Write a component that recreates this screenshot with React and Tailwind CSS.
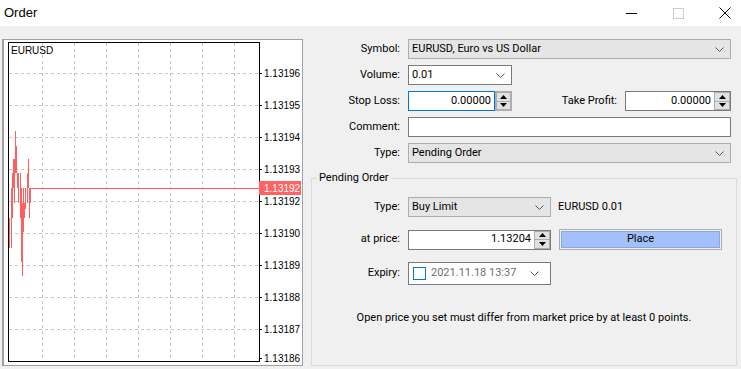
const bars = [
  [8, 218, 248], [10, 188, 248], [11, 173, 218], [12, 159, 188], [13, 159, 203],
  [14, 131, 173], [15, 146, 173], [16, 173, 188], [17, 173, 203], [19, 173, 218],
  [20, 188, 262], [21, 203, 276], [22, 188, 232], [23, 203, 218], [24, 188, 209],
  [26, 173, 203], [27, 159, 188], [28, 188, 218], [29, 188, 203],
];

const gridX = [41, 73, 105, 137, 169, 201, 233];
const gridY = [73, 105, 137, 169, 201, 233, 265, 297, 329];
const prices = [
  ["1.13196", 73], ["1.13195", 105], ["1.13194", 137], ["1.13193", 169], ["1.13192", 201],
  ["1.13190", 233], ["1.13189", 265], ["1.13188", 297], ["1.13187", 329], ["1.13186", 358],
];

function Chart() {
  return (
    <svg width="299" height="325" viewBox="3 40 299 325" className="block">
      {gridX.map((x) => (
        <line key={x} x1={x + 0.5} y1="43" x2={x + 0.5} y2="361" stroke="#c8c8c8" strokeDasharray="3 3" />
      ))}
      {gridY.map((y) => (
        <line key={y} x1="8" y1={y + 0.5} x2="258" y2={y + 0.5} stroke="#c8c8c8" strokeDasharray="3 3" />
      ))}
      {bars.map(([x, a, b], i) => (
        <line key={i} x1={x + 0.5} y1={a} x2={x + 0.5} y2={b} stroke="#ff5f5f" />
      ))}
      <line x1="29" y1="188.5" x2="258" y2="188.5" stroke="#ff5f5f" />
      <rect x="7.5" y="42.5" width="251" height="319" fill="none" stroke="#000" />
      {prices.map(([p, y]) => (
        <g key={p}>
          <line x1="258" y1={y + 0.5} x2="261" y2={y + 0.5} stroke="#000" />
          <text x="263" y={y + 4} fontSize="10" fontFamily="Liberation Sans, sans-serif" fill="#000">{p}</text>
        </g>
      ))}
      <rect x="258" y="181" width="42" height="14" fill="#ff6262" />
      <text x="263" y="192" fontSize="10" fontFamily="Liberation Sans, sans-serif" fill="#fff">1.13192</text>
      <text x="10" y="54" fontSize="10" fontFamily="Liberation Sans, sans-serif" fill="#000">EURUSD</text>
    </svg>
  );
}

function Chevron() {
  return (
    <svg width="9" height="5" viewBox="0 0 9 5" className="shrink-0">
      <path d="M0.5 0.5 L4.5 4.5 L8.5 0.5" fill="none" stroke="#555" strokeWidth="1" />
    </svg>
  );
}

function Spinner({ className = "" }) {
  return (
    <div className={`flex flex-col w-[16px] h-[18px] ${className}`}>
      <div className="flex-1 flex items-center justify-center bg-[#e1e1e1] border border-[#adadad]">
        <svg width="7" height="4" viewBox="0 0 7 4"><path d="M0 4 L3.5 0 L7 4 Z" fill="#000" /></svg>
      </div>
      <div className="flex-1 flex items-center justify-center bg-[#e1e1e1] border border-t-0 border-[#adadad]">
        <svg width="7" height="4" viewBox="0 0 7 4"><path d="M0 0 L3.5 4 L7 0 Z" fill="#000" /></svg>
      </div>
    </div>
  );
}

function Select({ value, width, gray }) {
  return (
    <div
      className={`flex items-center justify-between h-[20px] pl-[3px] pr-[6px] border ${
        gray ? "bg-[#e5e5e5] border-[#adadad]" : "bg-white border-[#7a7a7a]"
      } ${width}`}
    >
      <span>{value}</span>
      <Chevron />
    </div>
  );
}

function Row({ label, labelW = "w-[97px]", children, className = "" }) {
  return (
    <div className={`flex items-center ${className}`}>
      <div className={`${labelW} text-right shrink-0`}>{label}</div>
      <div className="ml-[8px] flex items-center">{children}</div>
    </div>
  );
}

export default function App() {
  return (
    <div className="w-[741px] h-[369px] overflow-hidden flex flex-col bg-[#f0f0f0] text-black text-[11px] font-['Roboto',sans-serif]">
      <div className="h-[26px] bg-white flex items-center shrink-0">
        <span className="ml-[4px] text-[13px] font-['Liberation_Sans',sans-serif]">Order</span>
        <div className="ml-auto flex items-center">
          <svg width="12" height="12" viewBox="0 0 12 12" className="mr-[34px]"><line x1="0" y1="6.5" x2="11" y2="6.5" stroke="#000" /></svg>
          <svg width="12" height="12" viewBox="0 0 12 12" className="mr-[35px]"><rect x="1.5" y="1.5" width="10" height="10" fill="none" stroke="#cccccc" /></svg>
          <svg width="12" height="12" viewBox="0 0 12 12" className="mr-[10px]"><path d="M0.5 0.5 L11.5 11.5 M11.5 0.5 L0.5 11.5" stroke="#000" /></svg>
        </div>
      </div>

      <div className="flex flex-1">
        <div className="mt-[13px] ml-[2px] w-[301px] h-[327px] border border-[#a0a0a0] border-l-2 bg-white shrink-0 overflow-hidden">
          <Chart />
        </div>

        <div className="flex-1 pt-[13px] flex flex-col">
          <Row label="Symbol:">
            <Select value="EURUSD, Euro vs US Dollar" width="w-[323px]" gray />
          </Row>
          <Row label="Volume:" className="mt-[6px]">
            <Select value="0.01" width="w-[104px]" />
          </Row>
          <div className="flex items-center mt-[6px]">
            <div className="w-[97px] text-right shrink-0">Stop Loss:</div>
            <div className="ml-[8px] flex items-center">
              <div className="w-[87px] h-[20px] border border-[#0078d7] bg-white flex items-center justify-end pr-[3px]">
                0.00000
              </div>
              <div className="h-[20px] w-[17px] border border-[#adadad] bg-[#f0f0f0] flex items-center justify-center">
                <Spinner />
              </div>
            </div>
            <div className="w-[105px] text-right shrink-0">Take Profit:</div>
            <div className="ml-[8px] w-[106px] h-[20px] border border-[#7a7a7a] bg-white flex items-center">
              <span className="flex-1 text-right pr-[3px]">0.00000</span>
              <Spinner />
            </div>
          </div>
          <Row label="Comment:" className="mt-[6px]">
            <div className="w-[323px] h-[20px] border border-[#7a7a7a] bg-white" />
          </Row>
          <Row label="Type:" className="mt-[6px]">
            <Select value="Pending Order" width="w-[323px]" gray />
          </Row>

          <div className="relative mt-[15px] ml-[8px] w-[426px] h-[188px] border border-[#dcdcdc] pt-[18px]">
            <span className="absolute left-[5px] top-[-9px] px-[2px] bg-[#f0f0f0]">Pending Order</span>
            <Row label="Type:" labelW="w-[88px]">
              <Select value="Buy Limit" width="w-[143px]" gray />
              <span className="ml-[7px]">EURUSD 0.01</span>
            </Row>
            <Row label="at price:" labelW="w-[88px]" className="mt-[12px]">
              <div className="w-[143px] h-[20px] border border-[#7a7a7a] bg-white flex items-center">
                <span className="flex-1 text-right pr-[3px]">1.13204</span>
                <Spinner />
              </div>
              <div className="ml-[8px] w-[163px] h-[21px] border border-[#adadad] p-[1px]">
                <div className="w-full h-full bg-[#a3c0fa] border border-[#86a8e8] flex items-center justify-center">
                  Place
                </div>
              </div>
            </Row>
            <Row label="Expiry:" labelW="w-[88px]" className="mt-[12px]">
              <div className="w-[143px] h-[23px] border border-[#7a7a7a] bg-white flex items-center pl-[4px] pr-[11px]">
                <div className="w-[13px] h-[13px] border border-[#0078d7]" />
                <span className="ml-[5px] text-[#6d6d6d]">2021.11.18 13:37</span>
                <span className="ml-auto"><Chevron /></span>
              </div>
            </Row>
            <div className="mt-[25px] text-center">
              Open price you set must differ from market price by at least 0 points.
            </div>
          </div>
        </div>
      </div>
    </div>
  );
}
